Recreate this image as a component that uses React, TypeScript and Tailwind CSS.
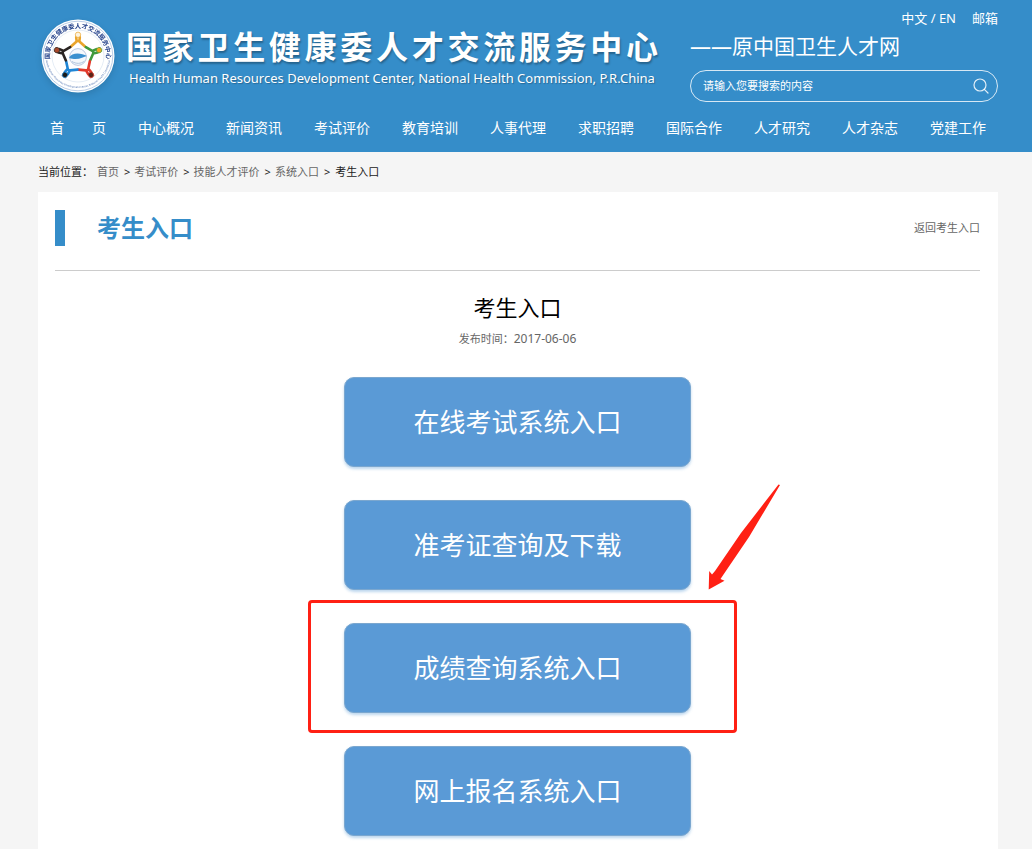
import { useState } from "react";

const navItems = [
    "首　　页",
    "中心概况",
    "新闻资讯",
    "考试评价",
    "教育培训",
    "人事代理",
    "求职招聘",
    "国际合作",
    "人才研究",
    "人才杂志",
    "党建工作",
];

const crumbs = ["首页", "考试评价", "技能人才评价", "系统入口"];

const entries = [
    { label: "在线考试系统入口" },
    { label: "准考证查询及下载" },
    { label: "成绩查询系统入口", marked: true },
    { label: "网上报名系统入口" },
];

const figures = [
    { angle: 0, color: "#eaa52c", head: "#fdf3df" },
    { angle: 72, color: "#3f9a3c", head: "#f0a822" },
    { angle: 144, color: "#e23a2c", head: "#5a2418" },
    { angle: 216, color: "#1f86d6", head: "#1b1b1b" },
    { angle: 288, color: "#2a2422", head: "#a8482a" },
];

const Logo = () => (
    <svg className="size-20 shrink-0 drop-shadow-md" viewBox="0 0 80 80" aria-hidden="true">
        <defs>
            <path id="ring-top" d="M12.4 46 A28.2 28.2 0 1 1 67.6 46" />
            <path id="ring-bottom" d="M7.8 44 A32.5 32.5 0 0 0 72.2 44" />
        </defs>
        <circle cx="40" cy="40" r="36.5" fill="#fff" />
        <circle cx="40" cy="40" r="34.8" fill="none" stroke="#9db9dc" strokeWidth="0.7" />
        <circle cx="40" cy="40" r="26" fill="none" stroke="#c9d8ea" strokeWidth="0.5" />
        <text fill="#27448c" fontSize="6.3" fontWeight="600">
            <textPath href="#ring-top" startOffset="50%" textAnchor="middle">
                国家卫生健康委人才交流服务中心
            </textPath>
        </text>
        <text fill="#4a6fae" fontSize="2.6">
            <textPath href="#ring-bottom" startOffset="50%" textAnchor="middle">
                Health Human Resources Development Center, National Health Commission
            </textPath>
        </text>
        {figures.map((f) => (
            <g key={f.angle} transform={`rotate(${f.angle} 40 41)`}>
                <path
                    d="M33 30.5 L38.6 25.5 L38.2 21 M41.8 21 L41.4 25.5 L47 30.5 M38.6 25 H41.4"
                    fill="none"
                    stroke={f.color}
                    strokeWidth="2.6"
                    strokeLinejoin="round"
                    strokeLinecap="round"
                />
                <circle cx="40" cy="18.8" r="2.7" fill={f.head} stroke={f.color} strokeWidth="0.7" />
            </g>
        ))}
        <circle cx="40" cy="41" r="8.4" fill="#f4f8fc" stroke="#9fb2d2" strokeWidth="0.7" />
        <path d="M31 42 C34 36 43 37 49 40 C45 41 40 45 31 42 Z" fill="#3a90cf" />
        <path d="M34 45.5 C38 48 43 48 46.5 45" fill="none" stroke="#9db8d6" strokeWidth="0.8" />
    </svg>
);

const Header = () => {
    const [keyword, setKeyword] = useState("");

    return (
        <header className="bg-[#358dc9] pl-[38px] pr-[34px] text-white">
            <div className="flex h-[104px] justify-between">
                <div className="flex items-start pt-4">
                    <Logo />
                    <div className="ml-2 w-[532px] pt-2">
                        <h1 className="text-[32px] leading-[46px] font-bold [text-align-last:justify] [text-shadow:1px_2px_2px_rgba(0,0,0,0.3)]">
                            国家卫生健康委人才交流服务中心
                        </h1>
                        <p className="text-center text-[13px] leading-4 whitespace-nowrap [text-shadow:1px_1px_1px_rgba(0,0,0,0.25)]">
                            Health Human Resources Development Center, National Health Commission, P.R.China
                        </p>
                    </div>
                </div>
                <div className="w-[308px] shrink-0 pt-2">
                    <div className="flex justify-end gap-4 text-[13px] leading-5">
                        <span>
                            <a href="#">中文</a> / <a href="#">EN</a>
                        </span>
                        <a href="#">邮箱</a>
                    </div>
                    <p className="text-[21px] leading-9">——原中国卫生人才网</p>
                    <form
                        className="mt-[6px] flex h-8 items-center rounded-full border border-white/80 pr-2 pl-3"
                        onSubmit={(e) => e.preventDefault()}
                    >
                        <input
                            className="min-w-0 flex-1 bg-transparent text-[11px] outline-none placeholder:text-white"
                            type="text"
                            aria-label="搜索"
                            placeholder="请输入您要搜索的内容"
                            value={keyword}
                            onChange={(e) => setKeyword(e.target.value)}
                        />
                        <button type="submit" aria-label="搜索">
                            <svg className="size-4" viewBox="0 0 16 16" fill="none" stroke="#fff" strokeOpacity="0.85" strokeWidth="1.2">
                                <circle cx="7" cy="7" r="6" />
                                <path d="M11.3 11.3 L15 15" strokeLinecap="round" />
                            </svg>
                        </button>
                    </form>
                </div>
            </div>
            <nav className="flex h-12 items-center justify-between px-3 text-sm">
                {navItems.map((item) => (
                    <a key={item} href="#" className="whitespace-nowrap">
                        {item}
                    </a>
                ))}
            </nav>
        </header>
    );
};

const Breadcrumb = () => (
    <div className="flex h-10 items-center text-[11px] text-[#222]">
        <span>当前位置：</span>
        {crumbs.map((c) => (
            <span key={c} className="ml-1">
                <a href="#" className="text-[#666]">
                    {c}
                </a>
                <span className="ml-[5px]">&gt;</span>
            </span>
        ))}
        <span className="ml-[5px]">考生入口</span>
    </div>
);

// red box and arrow around the entry to click
const Marker = () => (
    <>
        <span className="pointer-events-none absolute -top-[23px] -right-[46px] -bottom-5 -left-9 rounded border-3 border-[#ff2014]" />
        <svg
            className="pointer-events-none absolute -top-[139px] left-[364px] h-[108px] w-[72px]"
            viewBox="0 0 72 108"
            aria-hidden="true"
        >
            <path
                d="M70.5 0.5 L72 1 L41 53 L14.5 92 L12.5 95 L16.5 96.8 L0.7 105.5 L1.2 87 L4 90.5 L7 87 L33 49 Z"
                fill="#ff2014"
            />
        </svg>
    </>
);

export default function App() {
    return (
        <div className="flex min-h-screen flex-col bg-[#f5f5f5] font-['Noto_Sans','Noto_Sans_CJK_SC',sans-serif]">
            <Header />
            <main className="flex flex-1 flex-col pl-[38px] pr-[34px]">
                <Breadcrumb />
                <section className="flex-1 bg-white pt-[18px] pr-[18px] pb-3 pl-[17px]">
                    <div className="flex items-start justify-between border-b border-[#ccc] pb-6">
                        <h2 className="border-l-10 border-[#358dc9] pl-8 text-2xl leading-9 font-bold text-[#358dc9]">
                            考生入口
                        </h2>
                        <a href="#" className="text-[11px] leading-9 text-[#666]">
                            返回考生入口
                        </a>
                    </div>
                    <h3 className="mt-[18px] text-center text-[22px] leading-9 text-black">考生入口</h3>
                    <p className="mt-1 text-center text-[11px] leading-5 text-[#666]">
                        发布时间：<span className="text-xs">2017-06-06</span>
                    </p>
                    <div className="mt-7 flex flex-col items-center gap-[33px]">
                        {entries.map((e) => (
                            <div key={e.label} className="relative">
                                <a
                                    href="#"
                                    className="flex h-[90px] w-[347px] items-center justify-center rounded-[10px] border border-[#7ba7cf] bg-[#5a9ad6] text-[26px] text-white shadow-[0_2px_3px_rgba(91,155,213,0.4)]"
                                >
                                    {e.label}
                                </a>
                                {e.marked && <Marker />}
                            </div>
                        ))}
                    </div>
                </section>
            </main>
        </div>
    );
}
